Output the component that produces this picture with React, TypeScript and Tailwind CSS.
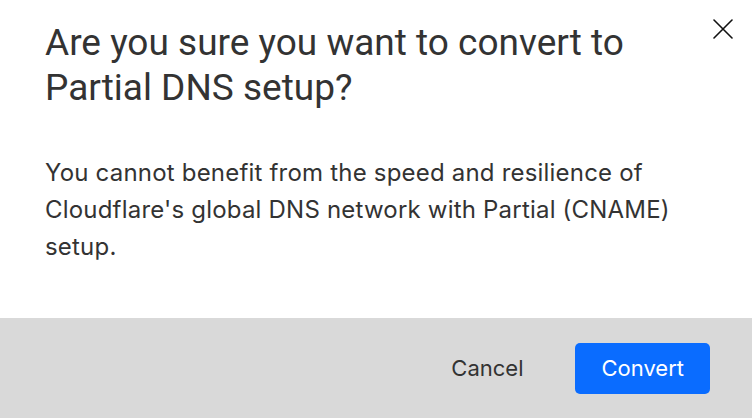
export default function App() {
  return (
    <div className="w-[752px] h-[418px] bg-white flex flex-col" style={{ fontFamily: "Inter, 'Noto Sans', sans-serif" }}>
      <div className="relative flex-1 px-[45px] pt-[20px]">
        {/* close */}
        <button className="absolute right-[19px] top-[19px] text-[#111]">
          <svg width="20" height="20" viewBox="0 0 20 20" fill="none" stroke="currentColor" strokeWidth="1.6" strokeLinecap="round">
            <path d="M1 1L19 19M19 1L1 19" />
          </svg>
        </button>
        <h2 className="text-[37px] leading-[45px] text-[#333] font-normal pr-[60px]" style={{ fontFamily: "Roboto, sans-serif" }}>
          Are you sure you want to convert to Partial DNS setup?
        </h2>
        <p className="mt-[44px] text-[24px] leading-[37px] tracking-[0.2px] text-[#333] pr-[15px]">
          You cannot benefit from the speed and resilience of Cloudflare's global DNS network with Partial (CNAME) setup.
        </p>
      </div>
      <div className="h-[100px] bg-[#d9d9d9] flex items-center justify-end gap-[24px] pr-[42px]">
        <button className="px-[28px] h-[51px] text-[22px] text-[#333]">Cancel</button>
        <button className="px-[26px] h-[51px] rounded-[5px] bg-[#0a6cff] text-white text-[22px]">Convert</button>
      </div>
    </div>
  )
}
